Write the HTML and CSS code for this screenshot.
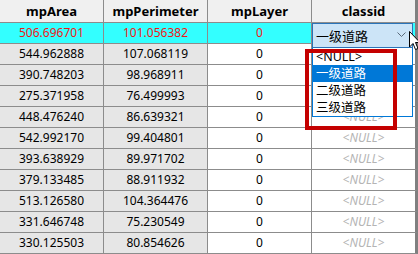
FILE: index.html
```html
<!DOCTYPE html>
<html lang="en">
<head>
    <meta charset="UTF-8">
    <title>Attribute Table</title>
    <link rel="stylesheet" href="styles.css">
</head>
<body>
    <div class="grid-wrap">
        <table class="attr-table">
            <colgroup>
                <col class="c-num">
                <col class="c-num">
                <col class="c-num">
                <col class="c-last">
            </colgroup>
            <thead>
                <tr>
                    <th>mpArea</th>
                    <th>mpPerimeter</th>
                    <th>mpLayer</th>
                    <th>classid</th>
                </tr>
            </thead>
            <tbody>
                <tr class="current">
                    <td class="ro">506.696701</td>
                    <td class="ro">101.056382</td>
                    <td>0</td>
                    <td></td>
                </tr>
                <!-- classid cells under the open list are hidden -->
                <tr><td class="ro">544.962888</td><td class="ro">107.068119</td><td>0</td><td class="null"></td></tr>
                <tr><td class="ro">390.748203</td><td class="ro">98.968911</td><td>0</td><td class="null"></td></tr>
                <tr><td class="ro">275.371958</td><td class="ro">76.499993</td><td>0</td><td class="null"></td></tr>
                <tr><td class="ro">448.476240</td><td class="ro">86.639321</td><td>0</td><td class="null">&lt;NULL&gt;</td></tr>
                <tr><td class="ro">542.992170</td><td class="ro">99.404801</td><td>0</td><td class="null">&lt;NULL&gt;</td></tr>
                <tr><td class="ro">393.638929</td><td class="ro">89.971702</td><td>0</td><td class="null">&lt;NULL&gt;</td></tr>
                <tr><td class="ro">379.133485</td><td class="ro">88.911932</td><td>0</td><td class="null">&lt;NULL&gt;</td></tr>
                <tr><td class="ro">513.126580</td><td class="ro">104.364476</td><td>0</td><td class="null">&lt;NULL&gt;</td></tr>
                <tr><td class="ro">331.646748</td><td class="ro">75.230549</td><td>0</td><td class="null">&lt;NULL&gt;</td></tr>
                <tr><td class="ro">330.125503</td><td class="ro">80.854626</td><td>0</td><td class="null">&lt;NULL&gt;</td></tr>
            </tbody>
        </table>

        <!-- open combobox editor on the current row -->
        <div class="combo">
            <span>一级道路</span>
            <svg class="chevron" width="9" height="6" viewBox="0 0 9 6">
                <polyline points="0.5,0.5 4.5,4.5 8.5,0.5" fill="none" stroke="#5a6a7a" stroke-width="1"/>
            </svg>
        </div>
        <ul class="combo-list">
            <li>&lt;NULL&gt;</li>
            <li class="selected">一级道路</li>
            <li>二级道路</li>
            <li>三级道路</li>
        </ul>

        <div class="mark"></div>

        <svg class="cursor" width="12" height="20" viewBox="0 0 12 20">
            <polygon points="0.5,0.5 0.5,16 4,12.5 6.5,18.5 9,17.5 6.5,11.5 11,11.5" fill="#fff" stroke="#000" stroke-width="1"/>
        </svg>
    </div>
</body>
</html>
```

FILE: styles.css
```css
body {
    margin: 0;
    background: #ffffff;
    font-family: "Noto Sans", "Noto Sans CJK SC", sans-serif;
}

.grid-wrap {
    position: relative;
    width: 418px;
    height: 254px;
    overflow: hidden;
}

.attr-table {
    border-collapse: separate;
    border-spacing: 0;
    table-layout: fixed;
    width: 418px;
}

.c-num {
    width: 104px;
}

.c-last {
    width: 106px;
}

.attr-table th,
.attr-table td {
    padding: 0;
    border-right: 1px solid #8c8c8c;
    border-bottom: 1px solid #8c8c8c;
    text-align: center;
    white-space: nowrap;
    overflow: hidden;
    color: #000;
}

.attr-table th:last-child,
.attr-table td:last-child {
    border-right: 3px solid #808080;
}

.attr-table th {
    height: 22px;
    background: #f0f0f0;
    font-size: 13px;
    font-weight: bold;
    line-height: 22px;
}

.attr-table td {
    height: 20px;
    font-size: 12px;
    line-height: 20px;
    background: #ffffff;
}

.attr-table td.ro {
    background: #e6e6e6;
}

.attr-table tr.current td {
    background: #33ffff;
    color: #f01818;
}

.attr-table td.null {
    font-style: italic;
    color: #b4b4b4;
}

.combo {
    position: absolute;
    left: 312px;
    top: 23px;
    width: 101px;
    height: 25px;
    box-sizing: border-box;
    border: 1px solid #2a73b8;
    background: #cce4f7;
    display: flex;
    align-items: center;
    justify-content: space-between;
    padding: 0 6px 0 3px;
    font-size: 13px;
}

.chevron {
    margin-top: -2px;
}

.combo-list {
    position: absolute;
    left: 312px;
    top: 48px;
    width: 101px;
    margin: 0;
    padding: 0;
    list-style: none;
    box-sizing: border-box;
    border: 1px solid #0078d7;
    border-top: none;
    background: #ffffff;
    font-size: 12.5px;
}

.combo-list li {
    height: 17px;
    line-height: 17px;
    padding-left: 3px;
}

.combo-list li.selected {
    background: #0078d7;
    color: #ffffff;
}

.mark {
    position: absolute;
    left: 305px;
    top: 49px;
    width: 92px;
    height: 81px;
    box-sizing: border-box;
    border: 4px solid #c40000;
}

.cursor {
    position: absolute;
    left: 409px;
    top: 31px;
}
```
